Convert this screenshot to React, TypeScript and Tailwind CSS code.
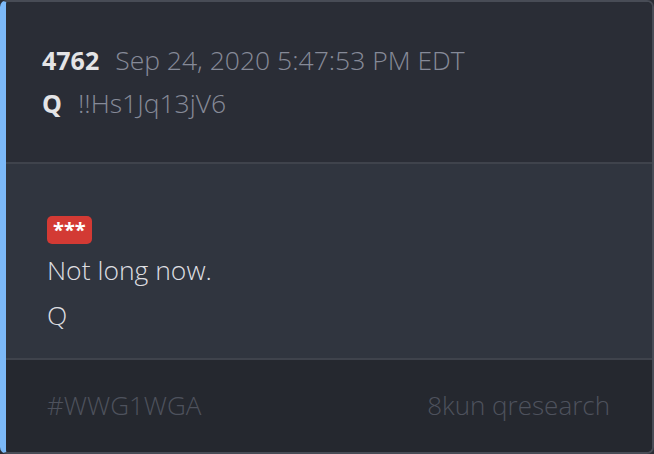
export default function App() {
  return (
    <div className="w-[654px] h-[454px] bg-[#2a2d35]" style={{ fontFamily: '"Open Sans", sans-serif' }}>
      <div className="h-full flex flex-col rounded-[7px] border-2 border-[#484c56] border-l-[6px] border-l-[#7cb9f8] overflow-hidden">
        {/* Header */}
        <div className="bg-[#2a2d36] pt-[42px] pb-[43px] pl-[36px] border-b-2 border-[#3f434c]">
          <div className="flex items-baseline gap-[16px] leading-[32px]">
            <span className="text-[25px] font-bold text-[#e4e4e6]">4762</span>
            <span className="text-[26.5px] font-light text-[#868a98]">Sep 24, 2020 5:47:53 PM EDT</span>
          </div>
          <div className="flex items-baseline gap-[16px] leading-[32px] mt-[11px]">
            <span className="text-[25px] font-bold text-[#e4e4e6]">Q</span>
            <span className="text-[26.5px] font-light text-[#868a98]">!!Hs1Jq13jV6</span>
          </div>
        </div>

        {/* Body */}
        <div className="bg-[#30353f] pt-[52px] pb-[27px] pl-[41px] border-b-2 border-[#3f434c] text-[#dedee1] font-light">
          <div className="inline-flex items-center h-[28px] px-[6px] rounded-[5px] bg-[#d33a34] text-white font-bold text-[20px] leading-none">
            ***
          </div>
          <p className="text-[26.5px] leading-[32px] mt-[10px]">Not long now.</p>
          <p className="text-[26.5px] leading-[32px] mt-[13px]">Q</p>
        </div>

        {/* Footer */}
        <div className="flex-1 bg-[#25282f] flex items-center justify-between pl-[41px] pr-[42px] pb-[2px] text-[26px] font-light text-[#4e525d]">
          <span>#WWG1WGA</span>
          <span>8kun qresearch</span>
        </div>
      </div>
    </div>
  );
}
